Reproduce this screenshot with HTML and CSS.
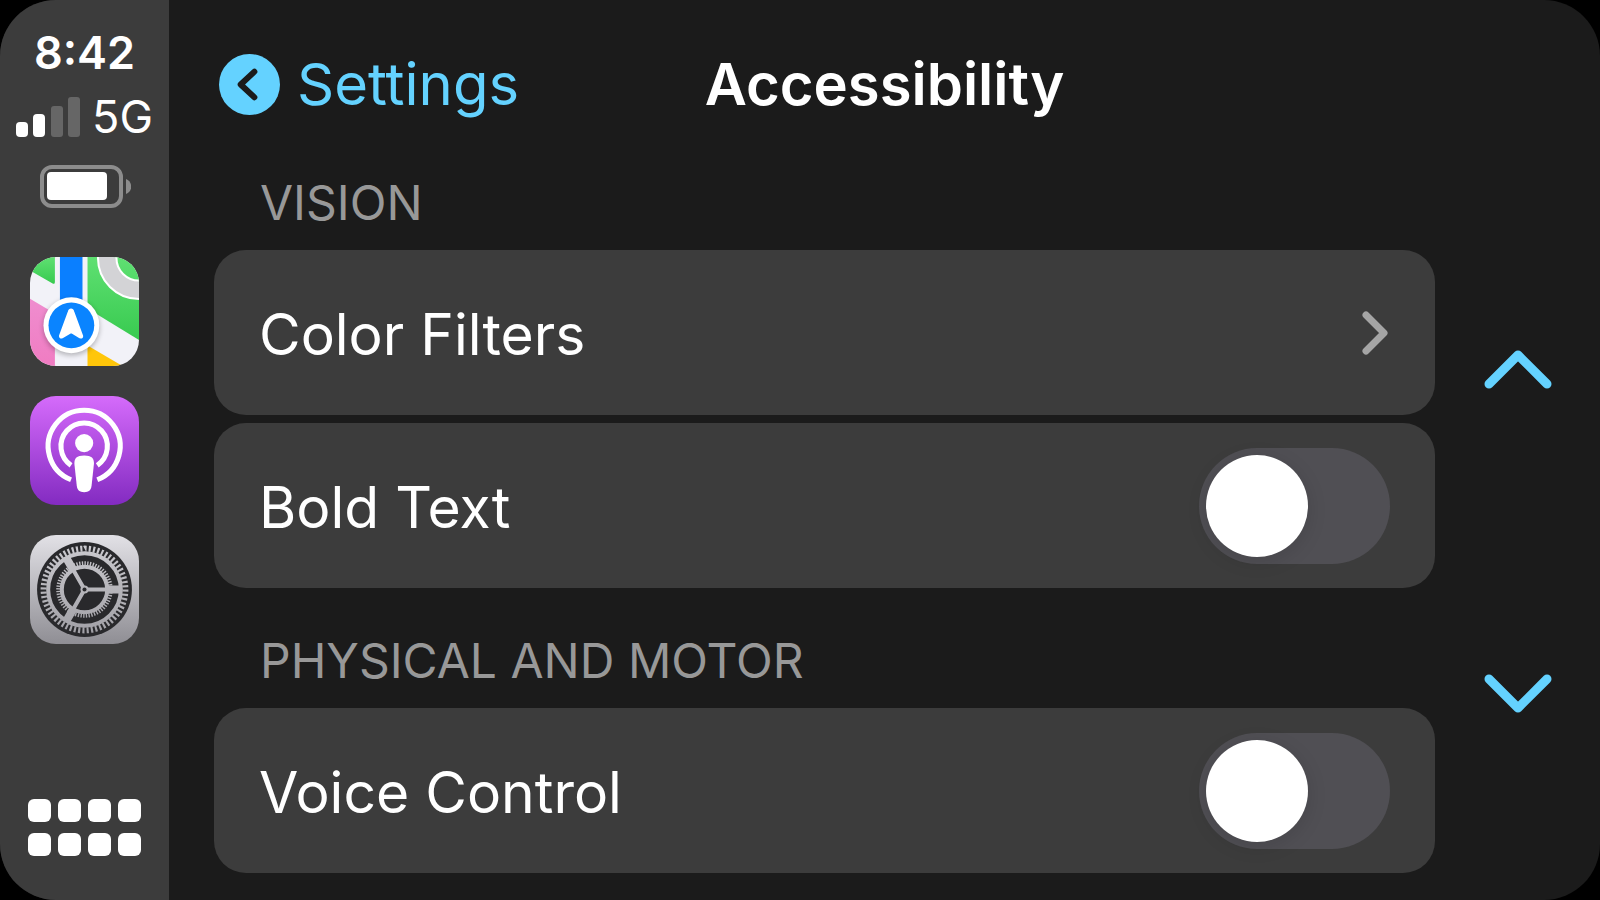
FILE: index.html
```html
<!DOCTYPE html>
<html lang="en">
<head>
<meta charset="utf-8">
<meta name="viewport" content="width=device-width, initial-scale=1">
<title>Accessibility</title>
<link rel="stylesheet" href="styles.css">
</head>
<body>
<div class="screen">
  <aside class="sidebar">
    <div class="status">
      <time class="clock">8:42</time>
      <div class="network">
        <svg class="signal" viewBox="0 0 64 40" aria-hidden="true">
          <rect x="0" y="25" width="12" height="15" rx="4" fill="#fff"/>
          <rect x="17" y="17" width="12" height="23" rx="4" fill="#fff"/>
          <rect x="35" y="9" width="12" height="31" rx="3" fill="#666"/>
          <rect x="52" y="0" width="12" height="40" rx="3" fill="#666"/>
        </svg>
        <span>5G</span>
      </div>
      <svg class="battery" viewBox="0 0 92 44" aria-hidden="true">
        <rect x="3" y="2" width="79" height="39" rx="10" fill="none" stroke="#8c8c8c" stroke-width="4"/>
        <rect x="8" y="7" width="60" height="28" rx="4" fill="#fff"/>
        <path d="M87 14c7 3 7 12 0 15z" fill="#8c8c8c"/>
      </svg>
    </div>
    <nav class="apps" aria-label="Apps">
      <a class="app" href="#maps" aria-label="Maps">
        <svg viewBox="0 0 324 324">
          <defs>
            <linearGradient id="green" x1="0" y1="0" x2="0" y2="1"><stop offset="0" stop-color="#5fe072"/><stop offset="1" stop-color="#38ca50"/></linearGradient>
            <linearGradient id="pink" x1="0" y1="0" x2="0" y2="1"><stop offset="0" stop-color="#ef8dcf"/><stop offset="1" stop-color="#f07cc2"/></linearGradient>
            <filter id="soft" x="-30%" y="-30%" width="160%" height="160%"><feGaussianBlur stdDeviation="8"/></filter>
          </defs>
          <path fill="#f2f2f8" d="M0 0h324v324H0z"/>
          <path fill="url(#green)" d="M0 0h74v74q0 9-8 4L0 40z"/>
          <path fill="url(#green)" d="M171 0h153v247L171 153z"/>
          <path fill="url(#pink)" d="M0 124l74 44v156H0z"/>
          <path fill="#ffc60a" d="M171 263l104 61H171z"/>
          <circle cx="324" cy="3" r="95" fill="none" stroke="#d3d3d6" stroke-width="54"/>
          <circle cx="324" cy="3" r="122" fill="none" stroke="#fff" stroke-width="6"/>
          <circle cx="324" cy="3" r="67" fill="none" stroke="#fff" stroke-width="6"/>
          <path fill="#0a7fff" d="M89 0h67v140H89z"/>
          <circle cx="123" cy="209" r="84" fill="#000" opacity=".25" filter="url(#soft)"/>
          <circle cx="123" cy="203" r="83" fill="#fff"/>
          <circle cx="123" cy="203" r="68" fill="#0a84ff"/>
          <path fill="#fff" stroke="#fff" stroke-width="8" stroke-linejoin="round" d="M122 157Q118 157 116 164L90 235Q90 240 95 238L119 224Q122 222 126 224L149 238Q155 240 154 235L128 164Q126 157 122 157z"/>
        </svg>
      </a>
      <a class="app" href="#podcasts" aria-label="Podcasts">
        <svg viewBox="0 0 324 324">
          <defs><linearGradient id="purple" x1="0" y1="0" x2="0" y2="1"><stop offset="0" stop-color="#d56bfb"/><stop offset="1" stop-color="#832bc1"/></linearGradient></defs>
          <path fill="url(#purple)" d="M0 0h324v324H0z"/>
          <g fill="none" stroke="#fff" stroke-width="15">
            <path d="M122 249A107 107 0 1 1 200 249"/>
            <path d="M122 206A69 69 0 1 1 200 206"/>
          </g>
          <circle cx="161" cy="140" r="27" fill="#fff"/>
          <path fill="#fff" d="M161 177c22 0 30 8 29 25l-7 65c-2 14-8 19-22 19s-20-5-22-19l-7-65c-1-17 7-25 29-25z"/>
        </svg>
      </a>
      <a class="app" href="#settings" aria-label="Settings">
        <svg viewBox="0 0 108 108">
          <defs><linearGradient id="silver" x1="0" y1="0" x2="0" y2="1"><stop offset="0" stop-color="#e2e1e6"/><stop offset="1" stop-color="#8f8e94"/></linearGradient>
          <linearGradient id="metal" gradientUnits="userSpaceOnUse" x1="0" y1="8" x2="0" y2="100"><stop offset="0" stop-color="#cccbd0"/><stop offset="1" stop-color="#a09fa5"/></linearGradient></defs>
          <path fill="url(#silver)" d="M0 0h108v108H0z"/>
          <circle cx="54" cy="54" r="47" fill="#29292c"/>
          <g fill="none" stroke="url(#metal)">
            <circle cx="54" cy="54" r="36" stroke-width="4"/>
            <circle cx="54" cy="54" r="40.5" stroke-width="6" pathLength="120" stroke-dasharray="1 1"/>
            <circle cx="54" cy="54" r="22.500" stroke-width="4"/>
            <circle cx="54" cy="54" r="26" stroke-width="4" pathLength="120" stroke-dasharray="1 1"/>
            <path stroke-width="8" d="M76 54h13M43 35l-6.500-11.300M43 73l-6.500 11.300"/>
            <path stroke-width="4" d="M54 54h23M54 54L42.500 34M54 54L42.500 74"/>
          </g>
          <circle cx="54" cy="54" r="4" fill="#b5b4b9"/>
          <circle cx="54" cy="54" r="2" fill="#29292c"/>
        </svg>
      </a>
    </nav>
    <button class="home" type="button" aria-label="Home">
      <i></i><i></i><i></i><i></i><i></i><i></i><i></i><i></i>
    </button>
  </aside>

  <main class="main">
    <header class="header">
      <a class="back" href="#settings">
        <svg class="back-icon" viewBox="0 0 62 62" aria-hidden="true">
          <circle cx="31" cy="31" r="31" fill="#64d2ff"/>
          <path d="M36 18L22 31L36 44" fill="none" stroke="#1b1b1b" stroke-width="6" stroke-linecap="round" stroke-linejoin="round"/>
        </svg>
        <span>Settings</span>
      </a>
      <h1 class="title">Accessibility</h1>
    </header>
    <div class="content">
      <div class="sections">
        <section>
          <h2 class="heading">VISION</h2>
          <div class="rows">
            <a class="row" href="#color-filters">
              <span class="label">Color Filters</span>
              <svg class="chevron" viewBox="0 0 28 44" aria-hidden="true"><path d="M4 4L22 22L4 40"/></svg>
            </a>
            <label class="row" for="bold-text">
              <span class="label">Bold Text</span>
              <input class="toggle" id="bold-text" type="checkbox" role="switch">
            </label>
          </div>
        </section>
        <section>
          <h2 class="heading">PHYSICAL AND MOTOR</h2>
          <div class="rows">
            <label class="row" for="voice-control">
              <span class="label">Voice Control</span>
              <input class="toggle" id="voice-control" type="checkbox" role="switch">
            </label>
          </div>
        </section>
      </div>
      <div class="scroller">
        <button class="scroll" type="button" aria-label="Scroll up"><svg viewBox="0 0 68 40"><path d="M5 34L34 5L63 34"/></svg></button>
        <button class="scroll" type="button" aria-label="Scroll down"><svg viewBox="0 0 68 40"><path d="M5 5L34 34L63 5"/></svg></button>
      </div>
    </div>
  </main>
</div>
</body>
</html>
```

FILE: styles.css
```css
* {
  box-sizing: border-box;
}

html {
  background: #000;
}

body {
  margin: 0;
  font-family: Inter, "Liberation Sans", sans-serif;
  color: #fff;
}

a {
  color: inherit;
  text-decoration: none;
}

button {
  padding: 0;
  border: 0;
  background: none;
  cursor: pointer;
}

svg {
  display: block;
}

.screen {
  display: flex;
  min-height: 100vh;
  border-radius: 56px;
  overflow: hidden;
  background: #1b1b1b;
}

.sidebar {
  display: flex;
  flex-direction: column;
  align-items: center;
  flex: none;
  width: 169px;
  padding: 28px 0 44px;
  background: #3c3c3c;
}

.status {
  display: flex;
  flex-direction: column;
  align-items: center;
}

.clock {
  font-size: 45px;
  line-height: 50px;
  font-weight: 600;
}

.network {
  display: flex;
  align-items: center;
  gap: 12px;
  margin-top: 14px;
  font-size: 45px;
  line-height: 50px;
}

.signal {
  width: 64px;
  height: 40px;
}

.battery {
  width: 92px;
  height: 44px;
  margin-top: 23px;
}

.apps {
  display: flex;
  flex-direction: column;
  gap: 30px;
  margin-top: 48px;
}

.app {
  width: 109px;
  height: 109px;
  border-radius: 26px;
  overflow: hidden;
}

.home {
  display: grid;
  grid-template-columns: repeat(4, 23px);
  gap: 11px 7px;
  margin-top: auto;
}

.home i {
  height: 23px;
  border-radius: 6px;
  background: #fff;
}

.main {
  flex: 1;
  min-width: 0;
  padding: 54px 0 27px;
}

.header {
  display: grid;
  grid-template-columns: 1fr auto 1fr;
  align-items: center;
  height: 61px;
  padding: 0 50px;
}

.back {
  display: flex;
  align-items: center;
  gap: 17px;
  font-size: 58px;
  line-height: 61px;
  color: #64d2ff;
}

.back-icon {
  width: 61px;
  height: 61px;
}

.title {
  margin: 0;
  font-size: 58px;
  line-height: 61px;
  font-weight: 600;
}

.content {
  display: flex;
  margin-top: 60px;
  padding-left: 45px;
}

.sections {
  display: flex;
  flex-direction: column;
  flex: 1;
  min-width: 0;
  gap: 45px;
}

.heading {
  margin: 0 0 19px;
  padding: 0 46px;
  font-size: 48px;
  line-height: 56px;
  font-weight: 400;
  color: #989898;
}

.rows {
  display: flex;
  flex-direction: column;
  gap: 8px;
}

.row {
  display: flex;
  align-items: center;
  justify-content: space-between;
  min-height: 165px;
  padding: 0 45px;
  border-radius: 32px;
  background: #3c3c3c;
  cursor: pointer;
}

.label {
  padding-top: 4px;
  font-size: 57px;
  line-height: 70px;
}

.chevron {
  width: 28px;
  height: 44px;
  fill: none;
  stroke: #a5a5a5;
  stroke-width: 7;
  stroke-linecap: round;
  stroke-linejoin: round;
}

.toggle {
  appearance: none;
  flex: none;
  width: 191px;
  height: 116px;
  margin: 0;
  padding: 7px;
  border-radius: 58px;
  background: #504f54;
  cursor: pointer;
}

.toggle::before {
  content: "";
  display: block;
  width: 102px;
  height: 102px;
  border-radius: 50%;
  background: #fff;
  box-shadow: 0 4px 20px rgba(0, 0, 0, 0.12);
}

.toggle:checked {
  background: #30d158;
}

.toggle:checked::before {
  margin-left: auto;
}

.scroller {
  display: flex;
  flex-direction: column;
  align-items: center;
  justify-content: center;
  gap: 284px;
  flex: none;
  width: 165px;
  padding-top: 16px;
}

.scroll svg {
  width: 68px;
  height: 40px;
  fill: none;
  stroke: #64d2ff;
  stroke-width: 9;
  stroke-linecap: round;
  stroke-linejoin: round;
}
```
